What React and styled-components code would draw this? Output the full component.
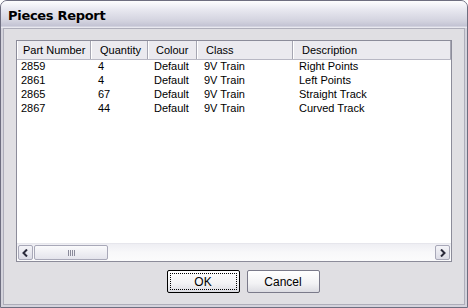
import React from 'react';
import styled, { createGlobalStyle } from 'styled-components';

const GlobalStyle = createGlobalStyle`
  html, body { margin: 0; padding: 0; background: #ffffff; }
  body { font-family: Tahoma, "Liberation Sans", sans-serif; }
`;

const Window = styled.div`
  width: 468px;
  height: 308px;
  box-sizing: border-box;
  display: flex;
  flex-direction: column;
  border: 1px solid #6e6e80;
  border-radius: 7px 7px 0 0;
  background: #d4d3dc;
  overflow: hidden;
`;

const TitleBar = styled.div`
  height: 27px;
  flex: none;
  display: flex;
  align-items: center;
  padding: 1px 0 0 7px;
  box-sizing: border-box;
  background: linear-gradient(180deg, #fdfdfe 0%, #e9e9f1 30%, #d2d2de 75%, #c3c3d3 92%, #f4f4f8 100%);
`;

const Title = styled.span`
  font-family: "DejaVu Sans", sans-serif;
  font-weight: bold;
  font-size: 13px;
  color: #000000;
  letter-spacing: -0.3px;
`;

const Body = styled.div`
  flex: 1;
  margin: 0 2px 2px 2px;
  border: 1px solid #aeaeba;
  background: #e0dfe3;
  display: flex;
  flex-direction: column;
  padding: 11px 12px 0 12px;
`;

const ListView = styled.div`
  height: 222px;
  border: 1px solid #8c8c9a;
  background: #ffffff;
  display: flex;
  flex-direction: column;
  box-sizing: border-box;
`;

const Header = styled.div`
  display: grid;
  grid-template-columns: 74px 57px 49px 96px 1fr;
  height: 18px;
  background: #ebeaef;
  border-bottom: 1px solid #b8b8c4;
  flex: none;
`;

const HeaderCell = styled.div`
  font-family: "Liberation Sans", sans-serif;
  font-size: 11px;
  color: #000;
  line-height: 17px;
  padding-top: 1px;
  padding-left: ${p => p.$pad}px;
  border-left: 1px solid #ffffff;
  border-right: 1px solid #a6a6b2;
  white-space: nowrap;
  overflow: hidden;
`;

const Rows = styled.div`
  flex: 1;
  display: flex;
  flex-direction: column;
`;

const Row = styled.div`
  display: grid;
  grid-template-columns: 74px 57px 49px 96px 1fr;
  height: 14px;
`;

const Cell = styled.div`
  font-family: "Liberation Sans", sans-serif;
  font-size: 11px;
  line-height: 13px;
  color: #000;
  padding-left: ${p => p.$pad}px;
  white-space: nowrap;
`;

const ScrollBar = styled.div`
  height: 17px;
  flex: none;
  display: flex;
  align-items: center;
  gap: 1px;
  padding: 0 1px;
  background: linear-gradient(180deg, #eeeef3 0%, #f8f8fa 50%, #fbfbfc 100%);
  border-top: 1px solid #e6e6ec;
`;

const Arrow = styled.div`
  width: 15px;
  height: 15px;
  box-sizing: border-box;
  border: 1px solid #a8a8b8;
  border-radius: 2px;
  background: linear-gradient(180deg, #f4f4f8 0%, #dcdce6 100%);
  display: flex;
  align-items: center;
  justify-content: center;
`;

const Thumb = styled.div`
  width: 74px;
  height: 15px;
  box-sizing: border-box;
  border: 1px solid #a8a8b8;
  border-radius: 2px;
  background: linear-gradient(180deg, #fafafc 0%, #e4e4ec 100%);
  display: flex;
  align-items: center;
  justify-content: center;
  gap: 1px;
`;

const Grip = styled.span`
  width: 1px;
  height: 6px;
  background: #8a8a9a;
`;

const Track = styled.div`
  flex: 1;
`;

const ButtonRow = styled.div`
  display: flex;
  justify-content: center;
  gap: 7px;
  padding: 8px 0 0 18px;
`;

const Button = styled.button`
  width: 73px;
  height: 23px;
  box-sizing: border-box;
  border: 1px solid ${p => (p.$default ? '#000000' : '#7a7a8a')};
  border-radius: 2px;
  background: linear-gradient(180deg, #ffffff 0%, #f2f2f4 60%, #dcdce2 100%);
  font-family: "Liberation Sans", sans-serif;
  font-size: 12px;
  color: #000;
  padding: ${p => (p.$default ? '2px' : '0')};
  display: flex;
  align-items: stretch;
  justify-content: stretch;
`;

const Focus = styled.span`
  flex: 1;
  display: flex;
  align-items: center;
  justify-content: center;
  border: ${p => (p.$focus ? '1px dotted #000' : 'none')};
`;

const columns = [
  { label: 'Part Number', pad: 5 },
  { label: 'Quantity', pad: 8 },
  { label: 'Colour', pad: 7 },
  { label: 'Class', pad: 8 },
  { label: 'Description', pad: 8 },
];

const rowPads = [4, 7, 6, 7, 6];

const pieces = [
  ['2859', '4', 'Default', '9V Train', 'Right Points'],
  ['2861', '4', 'Default', '9V Train', 'Left Points'],
  ['2865', '67', 'Default', '9V Train', 'Straight Track'],
  ['2867', '44', 'Default', '9V Train', 'Curved Track'],
];

const Chevron = ({ dir }) => (
  <svg width="7" height="8" viewBox="0 0 7 8">
    <path
      d={dir === 'left' ? 'M5 0.5 L1.5 4 L5 7.5' : 'M2 0.5 L5.5 4 L2 7.5'}
      fill="none"
      stroke="#2a2a3a"
      strokeWidth="2"
    />
  </svg>
);

function App() {
  return (
    <>
      <GlobalStyle />
      <Window>
        <TitleBar>
          <Title>Pieces Report</Title>
        </TitleBar>
        <Body>
          <ListView>
            <Header>
              {columns.map((c, i) => (
                <HeaderCell key={i} $pad={c.pad}>{c.label}</HeaderCell>
              ))}
            </Header>
            <Rows>
              {pieces.map((row, r) => (
                <Row key={r}>
                  {row.map((v, i) => (
                    <Cell key={i} $pad={rowPads[i]}>{v}</Cell>
                  ))}
                </Row>
              ))}
            </Rows>
            <ScrollBar>
              <Arrow><Chevron dir="left" /></Arrow>
              <Thumb>
                <Grip /><Grip /><Grip /><Grip />
              </Thumb>
              <Track />
              <Arrow><Chevron dir="right" /></Arrow>
            </ScrollBar>
          </ListView>
          <ButtonRow>
            <Button $default><Focus $focus>OK</Focus></Button>
            <Button><Focus>Cancel</Focus></Button>
          </ButtonRow>
        </Body>
      </Window>
    </>
  );
}

export default App;
